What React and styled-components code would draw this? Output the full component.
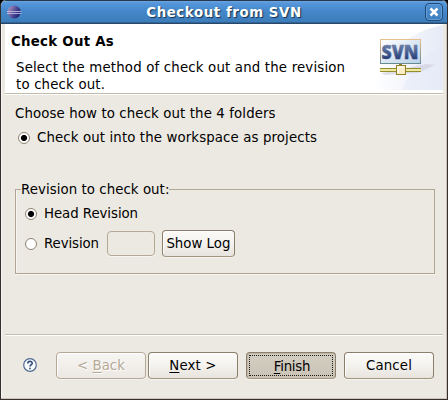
import React from "react";
import styled, { createGlobalStyle, css } from "styled-components";

const Global = createGlobalStyle`
  *, *::before, *::after { box-sizing: border-box; }
  body { margin: 0; background: #000; overflow: hidden; }
  button, input { font: inherit; margin: 0; }
`;

const Dialog = styled.main`
  width: 448px;
  height: 400px;
  display: flex;
  flex-direction: column;
  overflow: hidden;
  background: #ece9e2;
  border: 1px solid #35302f;
  border-top: 0;
  border-radius: 6px 6px 0 0;
  box-shadow: inset -1px -1px 0 #cdc3b7, inset 1px 0 0 #f7f5f2;
  color: #000;
  font: 13.33px/17px "DejaVu Sans", sans-serif;
  white-space: nowrap;
`;

const TitleBar = styled.header`
  height: 24px;
  flex: none;
  display: grid;
  grid-template-columns: 24px 1fr 24px;
  align-items: center;
  background: linear-gradient(#26384f 0 1px, #6da6e0 1px, #5597da 3px, #4487ca 11px, #3d7dba 22px, #28486b 23px);
  border-radius: 5px 5px 0 0;
`;

const Title = styled.h1`
  margin: 0;
  padding-top: 1px;
  text-align: center;
  color: #fff;
  font-size: 13.33px;
  line-height: 20px;
  letter-spacing: 0.58px;
  text-shadow: 1px 1px 1px #173250;
`;

const AppIcon = styled.svg`
  width: 16px;
  height: 16px;
  margin-left: 5px;
`;

const CloseButton = styled.button`
  width: 18px;
  height: 18px;
  margin-left: 2px;
  padding: 0;
  display: grid;
  place-items: center;
  border: 1px solid #204a75;
  border-radius: 4px;
  background: linear-gradient(#4f91d3, #3e7ebd);
  box-shadow: inset 0 0 0 1px #629fda;
`;

const Banner = styled.section`
  height: 71px;
  flex: none;
  margin: 0 4px;
  display: flex;
  justify-content: space-between;
  background: #fff;
  border-bottom: 1px solid #fff;
  box-shadow: inset 0 -1px 0 #c2bbaa;
`;

const BannerText = styled.div`
  padding: 9px 0 0 6px;
`;

const BannerTitle = styled.h2`
  margin: 0 0 9px;
  font-size: 13.33px;
  line-height: 17px;
  letter-spacing: 0.27px;
`;

const Line = styled.div`
  height: 17px;
  line-height: 17px;
  padding-left: ${(p) => p.$indent || 0}px;
  letter-spacing: ${(p) => p.$spacing || 0}px;
`;

const BannerArt = styled.svg`
  width: 75px;
  height: 66px;
  flex: none;
`;

const Body = styled.section`
  height: 239px;
  flex: none;
  padding: 10px 12px 0 14px;
`;

const Radio = styled.span`
  width: 12px;
  height: 12px;
  flex: none;
  border-radius: 50%;
  border: 1px solid #8f8474;
  background: ${(p) => (p.$on ? "radial-gradient(circle, #000 0 2.6px, #fff 3.6px)" : "#fff")};
`;

const Option = styled.label`
  height: 17px;
  display: flex;
  align-items: center;
  gap: 7px;
  padding-left: ${(p) => p.$indent || 0}px;
  margin-top: ${(p) => p.$top || 0}px;
  letter-spacing: ${(p) => p.$spacing || 0}px;
`;

const Group = styled.fieldset`
  height: 93px;
  margin: 35px 0 0;
  padding: 7px 0 0 9px;
  border: 1px solid #b1a594;
  box-shadow: inset 1px 0 0 #f7f5f0, 0 1px 0 #f7f5f0;
  min-width: 0;
`;

const Legend = styled.legend`
  height: 17px;
  margin-left: -4px;
  padding: 0;
  letter-spacing: 0.06px;
`;

const RevisionRow = styled.div`
  display: flex;
  align-items: center;
  height: 27px;
  margin-top: 8px;
`;

const RevisionInput = styled.input`
  width: 48px;
  height: 25px;
  margin-left: 8px;
  border: 1px solid #b5a996;
  border-radius: 4px;
  background: #ece9e2;
  box-shadow: 0 1px 0 #f7f5f0;
`;

const Button = styled.button`
  width: ${(p) => p.$width || 90}px;
  height: 27px;
  margin-left: ${(p) => p.$gap}px;
  padding: 0;
  border: 1px solid #8b7e6b;
  border-bottom-color: #a39681;
  border-radius: 4px;
  color: #000;
  line-height: 17px;
  letter-spacing: ${(p) => p.$spacing || 0}px;
  background: linear-gradient(#fbfaf8, #f5f3ef 50%, #e7e3dd);
  box-shadow: inset 1px 1px 0 #fff, 0 1px 0 #f5f3ef;

  ${(p) =>
    p.$kind === "disabled" &&
    css`
      color: #b5a996;
      border-color: #b5a996;
      background: linear-gradient(#f7f5f3, #ece8e3);
      text-shadow: 1px 1px 0 #fff;
    `}

  ${(p) =>
    p.$kind === "focused" &&
    css`
      background: linear-gradient(#d4cdc1, #cac3b6);
      box-shadow: inset 1px 1px 0 #c0b7a8, 0 1px 0 #f5f3ef;
      outline: 1px dotted #1c1a18;
      outline-offset: -4px;
      padding: 2px 0 0 2px;
    `}
`;

const Mnemonic = styled.span`
  text-decoration: underline;
  text-decoration-thickness: 1px;
  text-underline-offset: 2px;
`;

const Footer = styled.footer`
  flex: 1;
  margin: 0 4px;
  padding-top: 17px;
  display: flex;
  align-items: flex-start;
  border-top: 1px solid #c5bdad;
  box-shadow: inset 0 1px 0 #fff;
`;

const HelpIcon = styled.svg`
  width: 14px;
  height: 14px;
  margin: 6px 0 0 18px;
`;

function EclipseIcon() {
  return (
    <AppIcon viewBox="0 0 16 16">
      <defs>
        <linearGradient id="orb" x1="0" y1="0" x2="1" y2=".5">
          <stop offset="0" stopColor="#d5a9c8" />
          <stop offset=".3" stopColor="#8b76ad" />
          <stop offset=".7" stopColor="#42408f" />
          <stop offset="1" stopColor="#24266e" />
        </linearGradient>
      </defs>
      <ellipse cx="8.2" cy="8" rx="6.6" ry="6.5" fill="url(#orb)" />
      <path d="M1 7.5h14.5M1 9.5h14.5" stroke="#c6c9ed" strokeWidth=".8" />
    </AppIcon>
  );
}

function SvnArt() {
  return (
    <BannerArt viewBox="0 0 75 66">
      <defs>
        <linearGradient id="sky" x1="0" y1="0" x2="1" y2="0">
          <stop offset="0" stopColor="#fff" />
          <stop offset="1" stopColor="#dde4f4" />
        </linearGradient>
        <linearGradient id="frame" x1="0" y1="0" x2="0" y2="1">
          <stop offset="0" stopColor="#e5c08e" />
          <stop offset="1" stopColor="#688b94" />
        </linearGradient>
        <linearGradient id="panel" x1="0" y1="0" x2="1" y2="1">
          <stop offset="0" stopColor="#fff" />
          <stop offset="1" stopColor="#b9d0e8" />
        </linearGradient>
        <linearGradient id="word" x1="0" y1="0" x2="0" y2="1">
          <stop offset=".2" stopColor="#7186ac" />
          <stop offset=".8" stopColor="#273e78" />
        </linearGradient>
      </defs>
      <path d="M6 66C12 30 40 8 75 1v65z" fill="url(#sky)" opacity=".75" />
      <path d="M34 66C42 46 56 30 75 22v44z" fill="#e5eaf7" opacity=".5" />
      <path d="M14 49l45-9 8 1-17 8-34 2z" fill="#cdcbdc" opacity=".6" />
      <rect x="12.5" y="15.5" width="40" height="24" fill="url(#panel)" stroke="url(#frame)" />
      <text x="13.5" y="35" textLength="37" lengthAdjust="spacingAndGlyphs" fontFamily="Open Sans, sans-serif" fontWeight="800" fontSize="19.5" fill="url(#word)" stroke="url(#word)" strokeWidth=".4">SVN</text>
      <path d="M12 44.5h41M12 47.5h41" stroke="#948d2d" />
      <path d="M12 46h41" stroke="#eee8a1" strokeWidth="2" />
      <path d="M32.5 40v2" stroke="#8c802a" strokeWidth="3" />
      <rect x="28.5" y="41.5" width="9" height="9" fill="#f8edc4" stroke="#927f27" />
      <path d="M30 49v-6h6" fill="none" stroke="#fff" />
    </BannerArt>
  );
}

export default function App() {
  return (
    <>
      <Global />
      <Dialog>
        <TitleBar>
          <EclipseIcon />
          <Title>Checkout from SVN</Title>
          <CloseButton aria-label="Close">
            <svg width="10" height="10" viewBox="0 0 10 10">
              <path d="M1.5 1.5l7 7M8.5 1.5l-7 7" stroke="#fff" strokeWidth="2.5" />
            </svg>
          </CloseButton>
        </TitleBar>
        <Banner>
          <BannerText>
            <BannerTitle>Check Out As</BannerTitle>
            <Line $indent={5} $spacing={0.17}>Select the method of check out and the revision</Line>
            <Line $indent={5} $spacing={0.17}>to check out.</Line>
          </BannerText>
          <SvnArt />
        </Banner>
        <Body>
          <Line $spacing={0.11}>Choose how to check out the 4 folders</Line>
          <Option $indent={3} $top={7} $spacing={0.12}>
            <Radio $on />
            Check out into the workspace as projects
          </Option>
          <Group>
            <Legend>Revision to check out:</Legend>
            <Option $spacing={-0.06}>
              <Radio $on />
              Head Revision
            </Option>
            <RevisionRow>
              <Option $spacing={-0.1}>
                <Radio />
                Revision
              </Option>
              <RevisionInput aria-label="Revision number" disabled />
              <Button $width={73} $gap={7}>Show Log</Button>
            </RevisionRow>
          </Group>
        </Body>
        <Footer>
          <HelpIcon viewBox="0 0 14 14">
            <circle cx="7" cy="7" r="6.3" fill="#f8fafc" stroke="#506a91" strokeWidth="1.2" />
            <path d="M4.8 5.5C4.8 2.7 9.2 2.8 9.2 5.2C9.2 6.8 7 6.7 7 8.5M7 9.7v1.6" fill="none" stroke="#304d7c" strokeWidth="1.6" />
          </HelpIcon>
          <Button $gap={19} $kind="disabled">&lt; <Mnemonic>B</Mnemonic>ack</Button>
          <Button $gap={2} $spacing={0.15}><Mnemonic>N</Mnemonic>ext &gt;</Button>
          <Button $gap={8} $kind="focused" $spacing={-0.25}><Mnemonic>F</Mnemonic>inish</Button>
          <Button $gap={8} $spacing={0.15}>Cancel</Button>
        </Footer>
      </Dialog>
    </>
  );
}
